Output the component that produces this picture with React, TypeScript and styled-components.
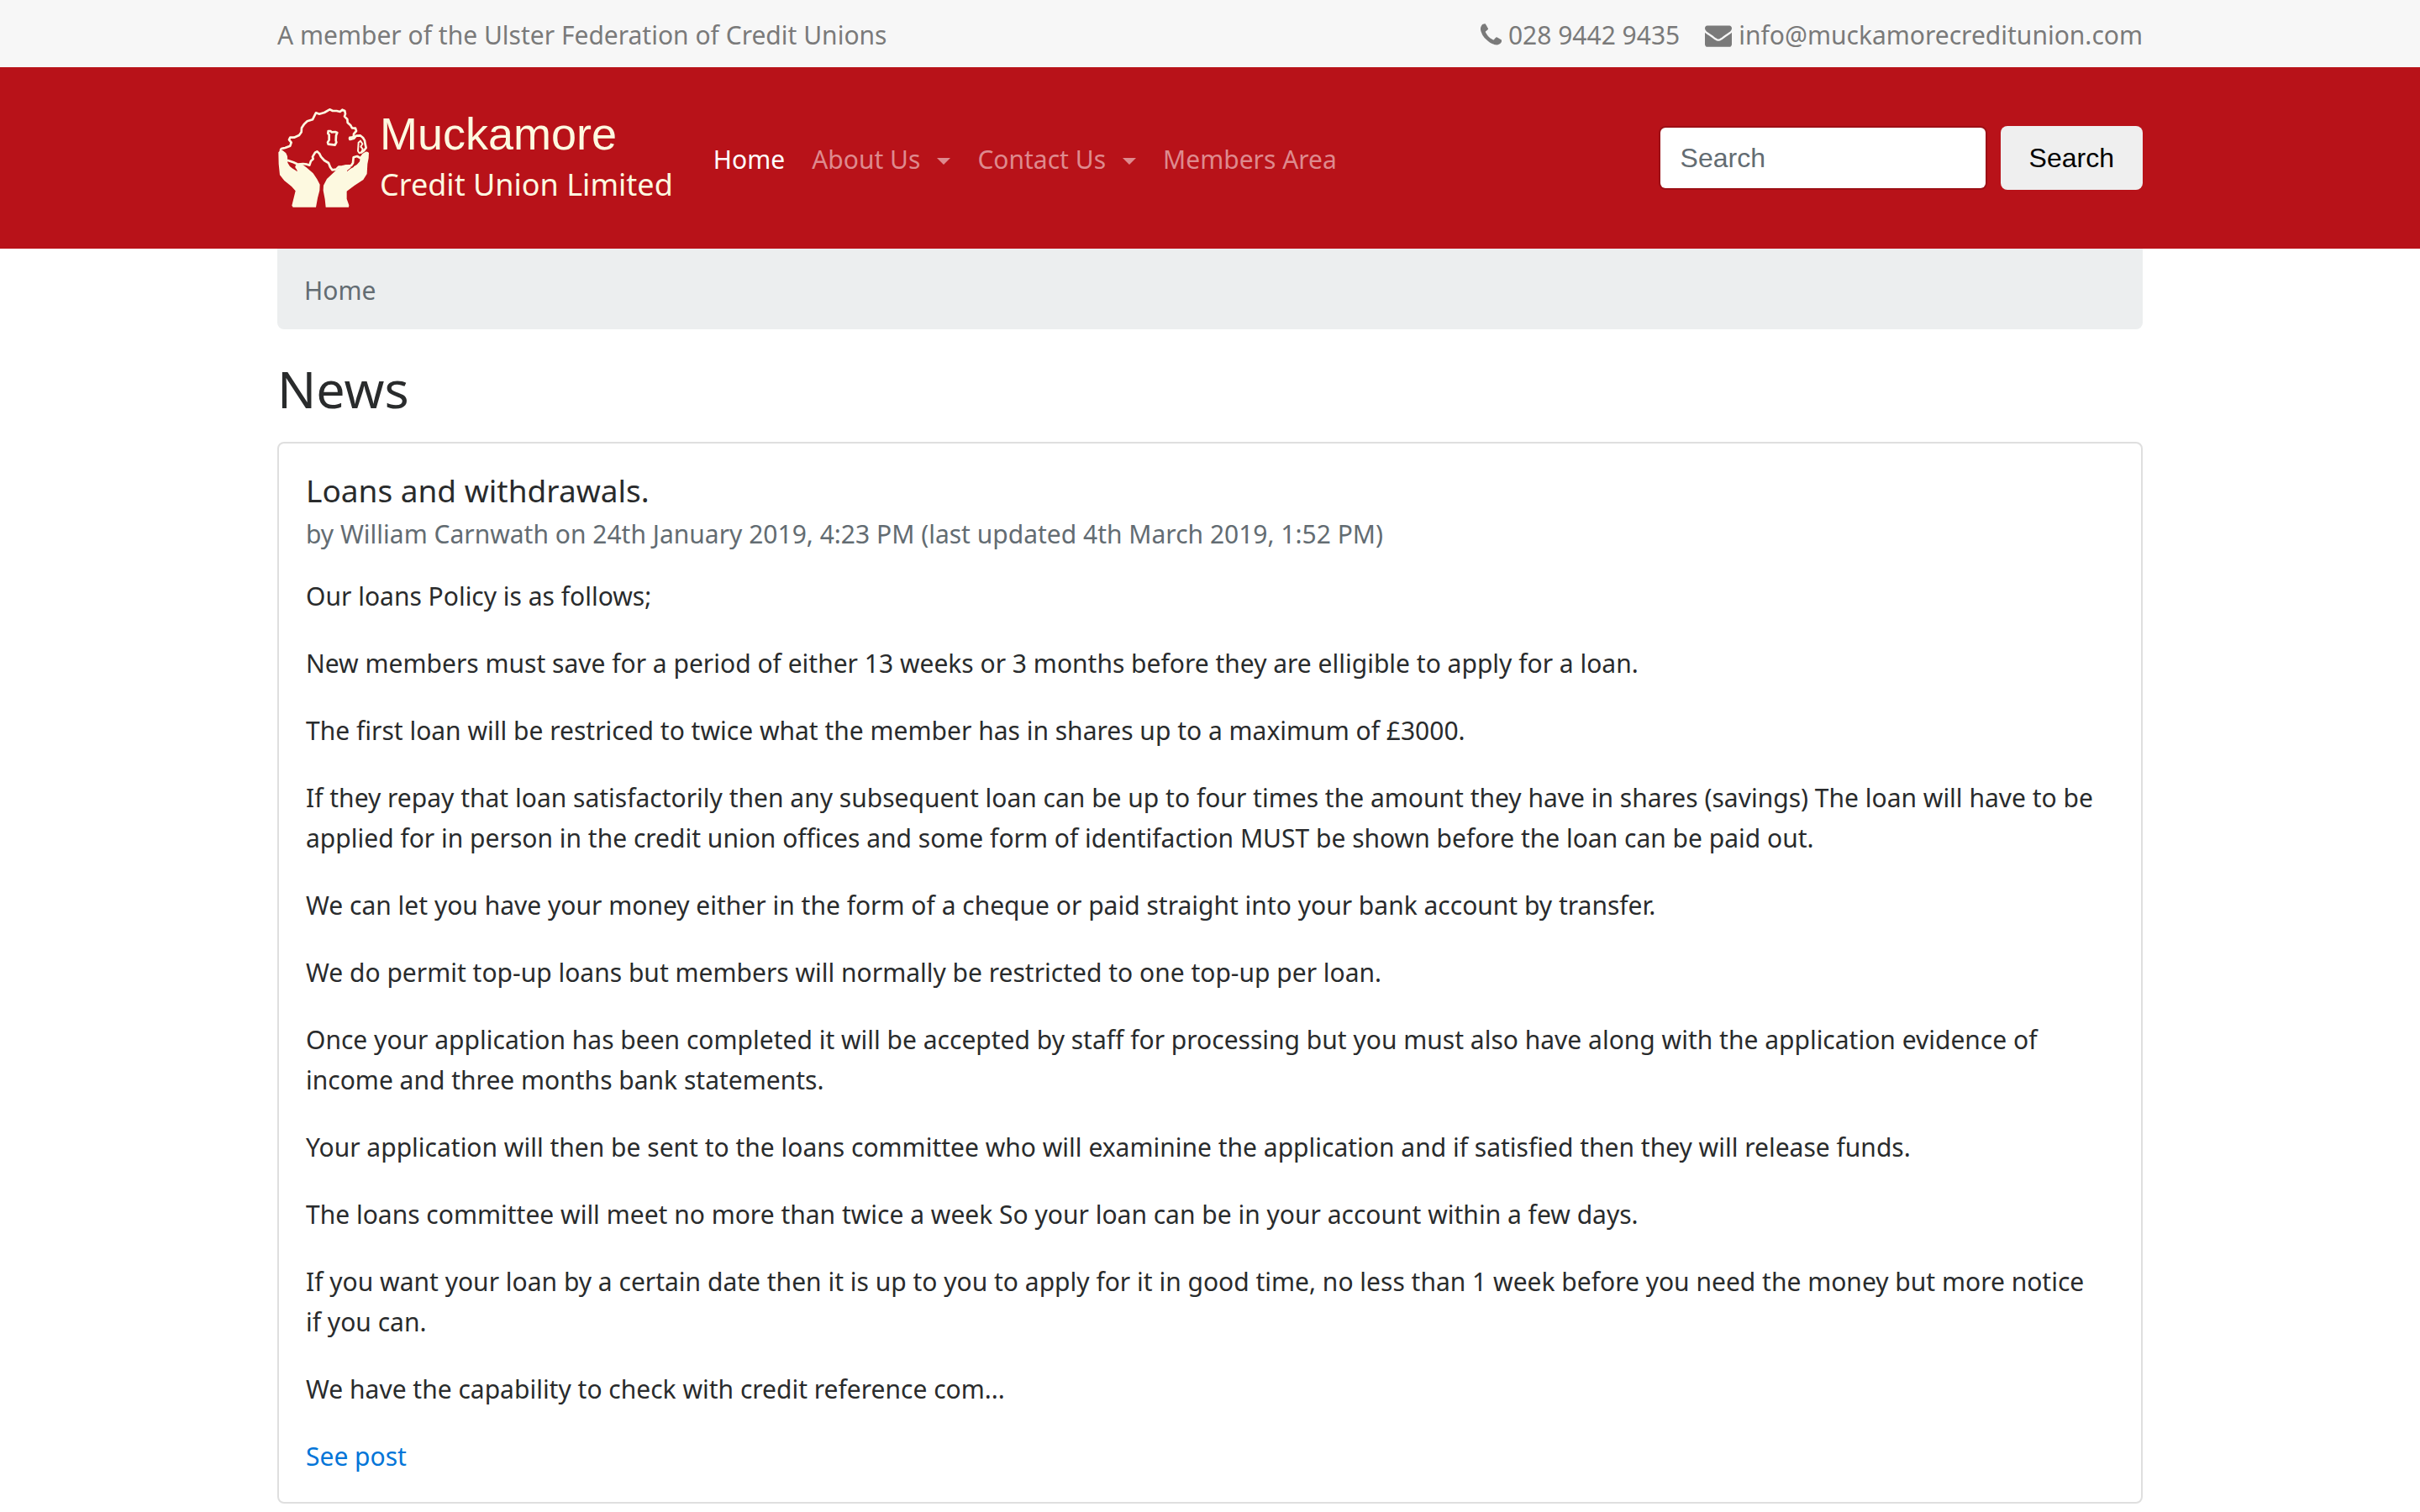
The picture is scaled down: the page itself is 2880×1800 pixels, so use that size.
import React from "react";
import styled, { createGlobalStyle } from "styled-components";

const GlobalStyle = createGlobalStyle`
  *, *::before, *::after { box-sizing: border-box; }
  body {
    margin: 0;
    background: #fff;
    color: #292b2c;
    font-family: "Noto Sans", "Open Sans", sans-serif;
    font-size: 30px;
    line-height: 48px;
  }
`;

const Container = styled.div`
  max-width: 2280px;
  margin: 0 auto;
  padding: 0 30px;
`;

const TopBar = styled.div`
  background: #f7f7f7;
  color: #7a7a7a;
  padding: 18px 0 14px;
`;

const TopRow = styled(Container)`
  display: flex;
  justify-content: space-between;
`;

const Contacts = styled.div`
  display: flex;
  gap: 30px;
`;

const ContactLink = styled.a`
  display: flex;
  align-items: center;
  gap: 8px;
  color: inherit;
  text-decoration: none;
`;

const Glyph = styled.svg`
  height: 32px;
  fill: currentColor;
`;

const Header = styled.header`
  background: #b81219;
`;

const HeaderRow = styled(Container)`
  display: flex;
  align-items: center;
  min-height: 216px;
`;

const Brand = styled.a`
  display: flex;
  align-items: center;
  gap: 12px;
  margin-right: 48px;
  color: #fdf9e0;
  text-decoration: none;
`;

const Emblem = styled.svg`
  width: 110px;
  height: 120px;
`;

const BrandText = styled.span`
  display: flex;
  flex-direction: column;
  gap: 2px;
  padding-top: 2px;
`;

const BrandName = styled.span`
  font: 54px/60px "Liberation Sans", Arial, sans-serif;
`;

const BrandSub = styled.span`
  font-size: 36px;
  line-height: 58px;
`;

const NavList = styled.ul`
  display: flex;
  gap: 32px;
  list-style: none;
  margin: 0;
  padding: 4px 0 0;
`;

const NavLink = styled.a<{ $active?: boolean }>`
  display: flex;
  align-items: center;
  gap: 20px;
  color: ${(p) => (p.$active ? "#fff" : "#de8a8e")};
  text-decoration: none;
`;

const Caret = styled.span`
  margin-top: 4px;
  border: 8px solid transparent;
  border-top-color: currentColor;
  border-bottom: 0;
`;

const SearchForm = styled.form`
  display: flex;
  gap: 16px;
  margin-left: auto;
`;

const SearchInput = styled.input`
  width: 391px;
  height: 76px;
  padding: 0 24px;
  border: 2px solid rgba(0, 0, 0, 0.15);
  border-radius: 8px;
  background: #fff;
  background-clip: padding-box;
  font: 32px/40px "Liberation Sans", Arial, sans-serif;
  &::placeholder { color: #636c72; opacity: 1; }
`;

const SearchButton = styled.button`
  height: 76px;
  padding: 0 34px;
  border: 0;
  border-radius: 8px;
  background: #efefef;
  color: #000;
  font: 32px/40px "Liberation Sans", Arial, sans-serif;
`;

const Breadcrumb = styled.ol`
  list-style: none;
  margin: 0 0 36px;
  padding: 26px 32px 22px;
  border-radius: 0 0 8px 8px;
  background: #eceeef;
  color: #636c72;
`;

const PageTitle = styled.h1`
  margin: 0 0 28px;
  font-size: 61px;
  font-weight: 400;
  line-height: 70px;
`;

const Card = styled.article`
  border: 2px solid #dfdfdf;
  border-radius: 8px;
  padding: 34px 32px 30px;
`;

const CardTitle = styled.h2`
  margin: 0 0 12px;
  font-size: 37px;
  font-weight: 400;
  line-height: 44px;
`;

const Byline = styled.p`
  margin: 0 0 32px;
  color: #636c72;
  line-height: 36px;
`;

const Paragraph = styled.p`
  margin: 0 0 32px;
`;

const PostLink = styled.a`
  display: block;
  color: #0275d8;
  text-decoration: none;
`;

const paragraphs = [
  "Our loans Policy is as follows;",
  "New members must save for a period of either 13 weeks or 3 months before they are elligible to apply for a loan.",
  "The first loan will be restriced to twice what the member has in shares up to a maximum of £3000.",
  "If they repay that loan satisfactorily then any subsequent loan can be up to four times the amount they have in shares (savings) The loan will have to be applied for in person in the credit union offices and some form of identifaction MUST be shown before the loan can be paid out.",
  "We can let you have your money either in the form of a cheque or paid straight into your bank account by transfer.",
  "We do permit top-up loans but members will normally be restricted to one top-up per loan.",
  "Once your application has been completed it will be accepted by staff for processing but you must also have along with the application evidence of income and three months bank statements.",
  "Your application will then be sent to the loans committee who will examinine the application and if satisfied then they will release funds.",
  "The loans committee will meet no more than twice a week So your loan can be in your account within a few days.",
  "If you want your loan by a certain date then it is up to you to apply for it in good time, no less than 1 week before you need the money but more notice if\u00a0you can.",
  "We have the capability to check with credit reference com...",
];

const navItems = [
  { label: "Home", active: true },
  { label: "About Us", menu: true },
  { label: "Contact Us", menu: true },
  { label: "Members Area" },
];

const PhoneIcon = () => (
  <Glyph viewBox="192 0 1408 1792" aria-hidden="true">
    <path d="M1600 1240q0 27-10 70.5t-25 68.5q-21 50-122 106-94 51-186 51-27 0-53-3.5t-57.5-12.5-47-14.5-55.5-20.5-49-18q-98-35-175-83-127-79-264-216t-216-264q-48-77-83-175-3-9-18-49t-20.5-55.5-14.5-47-12.5-57.5-3.5-53q0-92 51-186 56-101 106-122 25-15 68.5-25t70.5-10q14 0 21 3 18 6 53 76 11 19 30 54t35 63.5 31 53.5q3 4 17.5 25t21.5 35.5 7 28.5q0 20-28.5 50t-62 55-62 53-28.5 46q0 9 5 22.5t8.5 20.5 14 24 11.5 19q76 137 174 235t235 174q2 1 19 11.5t24 14 20.5 8.5 22.5 5q18 0 46-28.5t53-62 55-62 50-28.5q14 0 28.5 7t35.5 21.5 25 17.5q25 15 53.5 31t63.5 35 54 30q70 35 76 53 3 7 3 21z" />
  </Glyph>
);

const EnvelopeIcon = () => (
  <Glyph viewBox="0 0 1792 1792" aria-hidden="true">
    <path d="M1792 710v794q0 66-47 113t-113 47h-1472q-66 0-113-47t-47-113v-794q44 49 101 87 362 246 497 345 57 42 92.5 65.5t94.5 48 110 24.5h2q51 0 110-24.5t94.5-48 92.5-65.5q170-123 498-345 57-39 100-87zm0-294q0 79-49 151t-122 123q-376 261-468 325-10 7-42.5 31t-54 38.5-52 32.5-57.5 27-50 9h-2q-23 0-50-9t-57.5-27-52-32.5-54-38.5-42.5-31q-91-64-262-182.5t-205-142.5q-62-42-117-115.5t-55-136.5q0-78 41.5-130t118.5-52h1472q65 0 112.5 47t47.5 113z" />
  </Glyph>
);

const HandsEmblem = () => (
  <Emblem viewBox="30 24 330 360" aria-hidden="true">
    <g fill="none" stroke="#fdf9e0" strokeWidth="8" strokeLinejoin="round" strokeLinecap="round">
      <path d="M42 180 C40 168 50 170 58 168 L76 161 L80 149 L72 139 L76 131 L90 131 L108 123 L116 112 L117 97 L126 83 L137 73 L156 67 L163 53 L168 43 L180 47 L198 42 L217 31 L228 36 L242 36 L254 39 L262 32 L271 36 L273 47 L270 56 L280 66 L281 78 L292 88 L297 97 L309 98 L312 108 L303 118 L303 127 L289 135 L290 138 L304 134 L312 125 L326 124 L336 132 L342 142 L344 155 L347 168 L339 178 L330 184" />
      <path d="M68 213 L88 220 L104 227 L122 225 L136 227 L145 230 L150 215 L158 208 L156 200 L165 185 L172 181 L180 188 L186 200 L198 213 L213 222 L219 237 L226 247 L240 245 L249 236 L262 235 L274 233 L294 231 L300 222 L302 202 L315 198 L326 204" />
      <path d="M212 108 L220 108 L224 112 L237 111 L244 114 L240 124 L239 142 L241 148 L236 158 L212 155 L210 148 L215 140 L215 121 L211 117 Z" />
      <path d="M327 143 L320 149 L319 165 L318 179 L323 187 L331 184 L335 172 L328 164 L334 154 Z" strokeWidth="6" />
    </g>
    <g fill="#fdf9e0">
      <path d="M34 184 Q39 175 49 177 L61 187 L66 198 L67 221 Q73 234 83 241 L101 252 L94 240 Q93 229 100 227 L116 225 L132 236 L158 259 L172 280 L182 299 L181 320 L174 347 L168 380 L86 380 L82 374 L95 322 L81 306 L55 285 L39 265 L35 226 Z" />
      <path d="M357 186 Q353 180 345 182 L334 189 L327 199 L324 217 L314 228 L300 236 L279 252 L293 241 L292 232 L276 229 L260 233 L242 246 L207 279 L195 302 L194 320 L200 352 L203 380 L285 380 L286 373 L278 350 L278 323 L306 302 L337 282 L350 261 L352 226 L356 205 Z" />
      <circle cx="291" cy="134" r="7" />
    </g>
    <path d="M100 251 Q98 241 88 235 M279 251 Q290 240 303 235" fill="none" stroke="#b81219" strokeWidth="3" />
  </Emblem>
);

export default function App() {
  return (
    <>
      <GlobalStyle />
      <TopBar>
        <TopRow>
          <span>A member of the Ulster Federation of Credit Unions</span>
          <Contacts>
            <ContactLink href="tel:02894429435">
              <PhoneIcon />
              028 9442 9435
            </ContactLink>
            <ContactLink href="mailto:info@muckamorecreditunion.com">
              <EnvelopeIcon />
              info@muckamorecreditunion.com
            </ContactLink>
          </Contacts>
        </TopRow>
      </TopBar>
      <Header>
        <HeaderRow>
          <Brand href="#">
            <HandsEmblem />
            <BrandText>
              <BrandName>Muckamore</BrandName>
              <BrandSub>Credit Union Limited</BrandSub>
            </BrandText>
          </Brand>
          <nav>
            <NavList>
              {navItems.map((item) => (
                <li key={item.label}>
                  <NavLink href="#" $active={item.active}>
                    {item.label}
                    {item.menu && <Caret />}
                  </NavLink>
                </li>
              ))}
            </NavList>
          </nav>
          <SearchForm onSubmit={(e) => e.preventDefault()}>
            <SearchInput type="text" placeholder="Search" aria-label="Search" />
            <SearchButton type="submit">Search</SearchButton>
          </SearchForm>
        </HeaderRow>
      </Header>
      <Container as="main">
        <Breadcrumb>
          <li>Home</li>
        </Breadcrumb>
        <PageTitle>News</PageTitle>
        <Card>
          <CardTitle>Loans and withdrawals.</CardTitle>
          <Byline>
            by William Carnwath on 24th January 2019, 4:23 PM (last updated 4th March 2019, 1:52 PM)
          </Byline>
          {paragraphs.map((text) => (
            <Paragraph key={text}>{text}</Paragraph>
          ))}
          <PostLink href="#">See post</PostLink>
        </Card>
      </Container>
    </>
  );
}
